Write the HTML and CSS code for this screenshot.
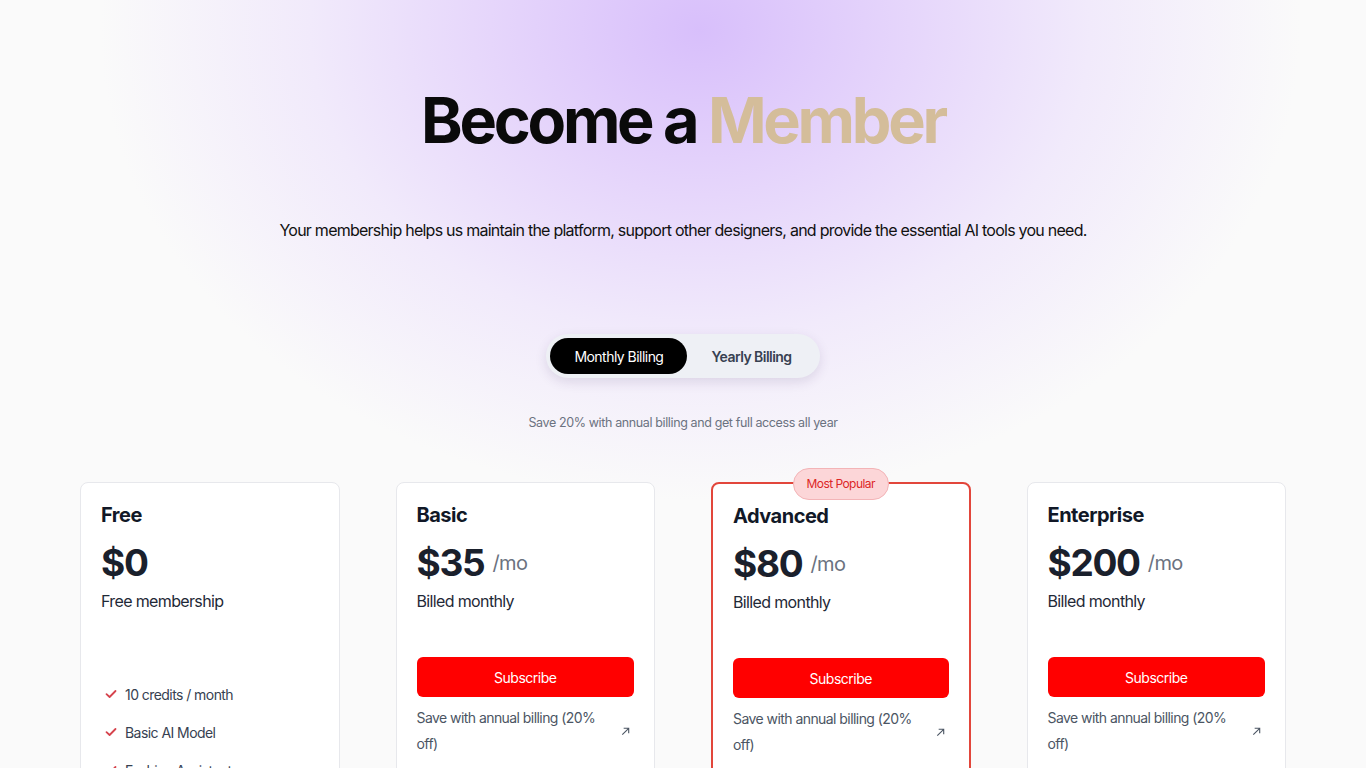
FILE: index.html
```html
<!DOCTYPE html>
<html lang="en">
<head>
<meta charset="utf-8">
<title>Become a Member</title>
<link rel="stylesheet" href="styles.css">
</head>
<body>
<main class="page">
  <section class="hero">
    <h1 class="title">Become a <span class="accent">Member</span></h1>
    <p class="subtitle">Your membership helps us maintain the platform, support other designers, and provide the essential AI tools you need.</p>
    <div class="toggle">
      <button class="toggle-btn active">Monthly Billing</button>
      <button class="toggle-btn">Yearly Billing</button>
    </div>
    <p class="save-note">Save 20% with annual billing and get full access all year</p>
  </section>

  <section class="plans">
    <article class="card">
      <h2 class="plan-name">Free</h2>
      <div class="price"><span class="amount">$0</span></div>
      <p class="billed">Free membership</p>
      <ul class="features">
        <li><svg class="check" viewBox="0 0 12 12"><path d="M1.5 6.2 L4.6 9 L10.5 3"/></svg>10 credits / month</li>
        <li><svg class="check" viewBox="0 0 12 12"><path d="M1.5 6.2 L4.6 9 L10.5 3"/></svg>Basic AI Model</li>
        <li><svg class="check" viewBox="0 0 12 12"><path d="M1.5 6.2 L4.6 9 L10.5 3"/></svg>Fashion Assistant</li>
      </ul>
    </article>

    <article class="card">
      <h2 class="plan-name">Basic</h2>
      <div class="price"><span class="amount">$35</span><span class="per">/mo</span></div>
      <p class="billed">Billed monthly</p>
      <button class="subscribe">Subscribe</button>
      <div class="annual"><span>Save with annual billing (20% off)</span><svg class="arrow" viewBox="0 0 12 12"><path d="M2.5 9.5 L9.5 2.5 M4 2.5 H9.5 V8"/></svg></div>
    </article>

    <article class="card popular">
      <span class="badge">Most Popular</span>
      <h2 class="plan-name">Advanced</h2>
      <div class="price"><span class="amount">$80</span><span class="per">/mo</span></div>
      <p class="billed">Billed monthly</p>
      <button class="subscribe">Subscribe</button>
      <div class="annual"><span>Save with annual billing (20% off)</span><svg class="arrow" viewBox="0 0 12 12"><path d="M2.5 9.5 L9.5 2.5 M4 2.5 H9.5 V8"/></svg></div>
    </article>

    <article class="card">
      <h2 class="plan-name">Enterprise</h2>
      <div class="price"><span class="amount">$200</span><span class="per">/mo</span></div>
      <p class="billed">Billed monthly</p>
      <button class="subscribe">Subscribe</button>
      <div class="annual"><span>Save with annual billing (20% off)</span><svg class="arrow" viewBox="0 0 12 12"><path d="M2.5 9.5 L9.5 2.5 M4 2.5 H9.5 V8"/></svg></div>
    </article>
  </section>
</main>
</body>
</html>
```

FILE: styles.css
```css
* { box-sizing: border-box; }

html, body {
  margin: 0;
  padding: 0;
}

body {
  font-family: Inter, "Noto Sans", "Liberation Sans", sans-serif;
  letter-spacing: -0.035em;
  color: #111827;
  background-color: #fafafa;
  background-image: radial-gradient(ellipse 600px 470px at 700px 30px, #d8bffb 0%, #e6d6fb 35%, #f1eafb 65%, #fafafa 100%);
  background-repeat: no-repeat;
  min-height: 768px;
}

.page {
  padding: 0 80px;
}

.hero {
  display: flex;
  flex-direction: column;
  align-items: center;
  padding-top: 80px;
}

.title {
  margin: 0;
  font-size: 63px;
  line-height: 80px;
  font-weight: 700;
  letter-spacing: -0.052em;
  color: #0a0a0a;
}

.accent {
  color: #d4bd9a;
}

.subtitle {
  margin: 58px 0 0;
  font-size: 16px;
  line-height: 24px;
  color: #111111;
  letter-spacing: -0.047em;
}

.toggle {
  margin-top: 92px;
  display: flex;
  align-items: center;
  padding: 4px;
  height: 44px;
  border-radius: 22px;
  background: #eef0f5;
  box-shadow: 0 4px 12px rgba(60, 40, 90, 0.13);
}

.toggle-btn {
  border: 0;
  background: transparent;
  font-family: inherit;
  letter-spacing: -0.038em;
  font-size: 14px;
  font-weight: 600;
  color: #374151;
  height: 36px;
  padding: 0 24px;
  border-radius: 18px;
  cursor: pointer;
}

.toggle-btn.active {
  background: #000;
  color: #fff;
  font-weight: 400;
}

.save-note {
  margin: 35px 0 0;
  font-size: 12.5px;
  line-height: 20px;
  letter-spacing: -0.03em;
  color: #6b7280;
}

.plans {
  margin-top: 49px;
  display: grid;
  grid-template-columns: repeat(4, 1fr);
  gap: 56px;
}

.card {
  position: relative;
  background: #fff;
  border: 1px solid #e7e8ec;
  border-radius: 8px;
  padding: 18px 20px 20px;
  height: 320px;
}

.card.popular {
  border: 2px solid #e2463b;
  padding: 18px 20px 20px;
}

.badge {
  position: absolute;
  top: -16px;
  left: 50%;
  transform: translateX(-50%);
  width: 96px;
  height: 32px;
  border-radius: 16px;
  background: #fcd6d8;
  border: 1px solid #f3b4b7;
  color: #dc2626;
  font-size: 12px;
  line-height: 30px;
  text-align: center;
  white-space: nowrap;
}

.plan-name {
  margin: 0;
  font-size: 20px;
  line-height: 28px;
  font-weight: 700;
  letter-spacing: -0.025em;
  color: #111827;
}

.price {
  margin-top: 14px;
  display: flex;
  align-items: center;
  height: 40px;
}

.amount {
  font-size: 37px;
  line-height: 40px;
  font-weight: 700;
  letter-spacing: -0.035em;
  color: #1a202c;
}

.per {
  margin-left: 8px;
  font-size: 20px;
  line-height: 24px;
  color: #6b7280;
}

.billed {
  margin: 6px 0 0;
  font-size: 16px;
  line-height: 24px;
  letter-spacing: -0.04em;
  color: #1f2937;
}

.subscribe {
  display: block;
  width: 100%;
  margin-top: 44px;
  height: 40px;
  border: 0;
  border-radius: 6px;
  background: #ff0000;
  color: #fff;
  font-family: inherit;
  letter-spacing: -0.035em;
  font-size: 14px;
  cursor: pointer;
}

.annual {
  margin-top: 8px;
  display: flex;
  align-items: center;
  justify-content: space-between;
  gap: 12px;
  font-size: 14px;
  line-height: 26px;
  color: #4b5563;
}

.annual span {
  max-width: 185px;
}

.arrow {
  width: 11px;
  height: 11px;
  flex: none;
  margin-right: 3px;
  fill: none;
  stroke: #4b5563;
  stroke-width: 1.2;
}

.features {
  list-style: none;
  margin: 62px 0 0;
  padding: 0 0 0 4px;
}

.features li {
  display: flex;
  align-items: center;
  gap: 8px;
  height: 38px;
  font-size: 14px;
  color: #374151;
}

.check {
  width: 12px;
  height: 12px;
  fill: none;
  stroke: #d6434d;
  stroke-width: 1.8;
  stroke-linecap: round;
  stroke-linejoin: round;
}
```
